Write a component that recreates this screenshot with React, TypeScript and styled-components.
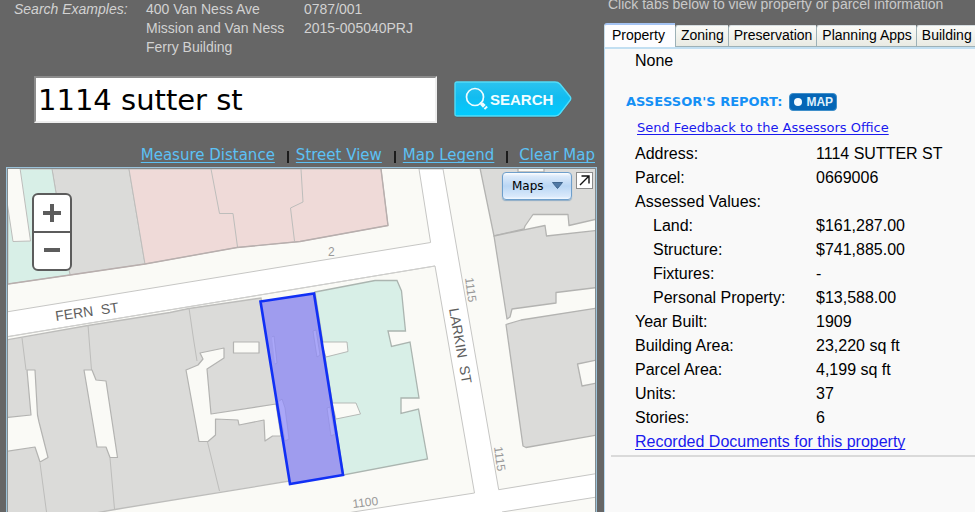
import React, { useState } from "react";
import styled, { createGlobalStyle } from "styled-components";

const GlobalStyle = createGlobalStyle`
  * { box-sizing: border-box; }
  html, body { margin: 0; background: #fff; }
  body { font-family: "Liberation Sans", Arial, sans-serif; color: #000; overflow: hidden; }
`;

const Page = styled.div`
  display: grid;
  grid-template-columns: minmax(0, 604fr) minmax(0, 371fr);
  min-height: calc(100vh - 1px);
  background: #666;
`;

const SearchColumn = styled.main`
  display: flex;
  flex-direction: column;
  padding: 0 7px 0 6px;
`;

const Examples = styled.div`
  display: grid;
  grid-template-columns: 132px 158px auto;
  padding-left: 8px;
  min-height: 76px;
  align-items: start;
  font-size: 14px;
  line-height: 19px;
  color: #d2d2d2;
`;

const ExamplesTitle = styled.em``;

const ExampleList = styled.ul`
  margin: 0;
  padding: 0;
  list-style: none;
`;

const SearchForm = styled.form`
  display: flex;
  align-items: center;
  gap: 17px;
  margin: 0;
  padding: 0 25px 0 28px;
`;

const SearchInput = styled.input`
  flex: 1;
  min-width: 0;
  height: 47px;
  padding: 0 0 0 2px;
  border: 2px solid;
  border-color: #8c8c8c #eee #eee #8c8c8c;
  border-radius: 0;
  background: #fff;
  color: #000;
  font-family: "DejaVu Sans", Verdana, sans-serif;
  font-size: 29px;
  outline: none;
`;

const SearchButton = styled.button`
  position: relative;
  display: flex;
  align-items: center;
  width: 118px;
  height: 38px;
  padding: 0 0 0 36px;
  border: 0;
  background: none;
  color: #f1fdff;
  font: bold 15px/36px "Liberation Sans", Arial, sans-serif;
  cursor: pointer;

  svg { position: absolute; inset: 0; }
  span { position: relative; }
`;

const MapLinks = styled.nav`
  display: flex;
  justify-content: flex-end;
  align-items: center;
  height: 44px;
  padding: 20px 2px 0 0;
  font-family: "DejaVu Sans", Verdana, sans-serif;
  font-size: 15px;
  line-height: 20px;
`;

const MapLink = styled.a`
  color: #5cc1f5;
  text-underline-offset: 2px;
  text-decoration-skip-ink: none;
`;

const Divider = styled.span<{ $wide?: boolean }>`
  width: 2px;
  height: 12px;
  margin: 4px ${(p) => (p.$wide ? 11 : 7)}px 0 12px;
  background: #1c1c1c;
`;

const MapFrame = styled.section`
  position: relative;
  flex: 1;
  min-height: 345px;
  border: 1px solid #9cc3da;
  border-bottom: 0;
  overflow: hidden;
`;

const MapSurface = styled.div`
  position: absolute;
  inset: 0;
  border: 1px solid #858b8d;
  border-bottom: 0;

  svg { display: block; width: 100%; height: 100%; }
`;

const ZoomControl = styled.div`
  position: absolute;
  top: 25px;
  left: 25px;
  width: 40px;
  border: 2px solid #5c5c5c;
  border-radius: 6px;
  overflow: hidden;
  background: #5c5c5c;
  display: grid;
  gap: 2px;
`;

const ZoomButton = styled.button`
  display: grid;
  place-items: center;
  height: 36px;
  padding: 0;
  border: 0;
  background: #fff;
  cursor: pointer;
`;

const MapTools = styled.div`
  position: absolute;
  top: 4px;
  right: 3px;
  display: flex;
  align-items: flex-start;
  gap: 4px;
`;

const MapsButton = styled.button`
  display: flex;
  align-items: center;
  gap: 8px;
  width: 70px;
  height: 28px;
  padding: 0 0 1px 9px;
  border: 1px solid #6e9fcc;
  border-radius: 4px;
  background: linear-gradient(#fff 0, #dceafa 12%, #b9d6f4 50%, #d9e9fb 90%, #f4f9ff 100%);
  box-shadow: 0 1px 1px #8cabc6;
  color: #000;
  font: 12px "DejaVu Sans", Verdana, sans-serif;
`;

const ExpandButton = styled.button`
  width: 17px;
  height: 17px;
  padding: 0;
  border: 1px solid #8b8b8b;
  background: #fff;
  display: grid;
  place-items: center;
`;

const InfoColumn = styled.aside`
  display: flex;
  flex-direction: column;
  min-width: 0;
  overflow: hidden;
`;

const Hint = styled.p`
  margin: 0 0 0 4px;
  font-size: 14px;
  line-height: 8px;
  height: 23px;
  color: #c9c9c9;
  white-space: nowrap;
`;

const TabBar = styled.div`
  display: flex;
  align-items: flex-end;
  height: 24px;
`;

const Tab = styled.button<{ $active?: boolean }>`
  flex: none;
  height: ${(p) => (p.$active ? 24 : 22)}px;
  padding: ${(p) => (p.$active ? "0 10px 3px 7px" : "0 4px 2px 5px")};
  border: 1px solid ${(p) => (p.$active ? "#c5dcea" : "#9db1b7")};
  border-top: ${(p) => (p.$active ? "2px solid #a4c3f3" : "1px solid #d5dde0")};
  border-right-width: 0;
  border-bottom-width: ${(p) => (p.$active ? 0 : 1)}px;
  border-radius: 3px 0 0 0;
  background: ${(p) => (p.$active ? "#fdfdff" : "linear-gradient(#fafbf8, #e9eae3)")};
  color: #000;
  font: 14px/18px "Liberation Sans", Arial, sans-serif;
  text-align: left;
`;

const Report = styled.div`
  flex: 1;
  border-left: 1px solid #b5d8f0;
  border-top: 2px solid #c2dff2;
  background: #f9f9f9;
  font-size: 16px;
  line-height: 24px;
`;

const NoneText = styled.p`
  margin: 0 0 17px 30px;
`;

const ReportHeading = styled.div`
  display: flex;
  align-items: center;
  gap: 7px;
  height: 24px;
  padding-left: 21px;
`;

const ReportTitle = styled.h2`
  margin: 0;
  color: #1590f5;
  font: bold 13px/20px "DejaVu Sans", Verdana, sans-serif;
`;

const MapBadge = styled.button`
  display: flex;
  align-items: center;
  gap: 4px;
  width: 48px;
  height: 18px;
  padding: 0 4px;
  border: 1px solid #3f8fca;
  border-radius: 4px;
  background: #0566b6;
  color: #dff0fb;
  font: bold 12px/16px "Liberation Sans", Arial, sans-serif;
`;

const Dot = styled.i`
  width: 8px;
  height: 8px;
  flex: none;
  border-radius: 50%;
  background: #f2faff;
`;

const TextLink = styled.a`
  color: #1a1aee;
  text-underline-offset: 2px;
  text-decoration-skip-ink: none;
`;

const Feedback = styled.p`
  margin: 0 0 0 32px;
  font: 13px/28px "DejaVu Sans", Verdana, sans-serif;
`;

const Details = styled.table`
  border-collapse: collapse;
  margin-left: 30px;
  line-height: 24px;
`;

const Label = styled.th<{ $indent?: boolean }>`
  width: 181px;
  padding: 0 0 0 ${(p) => (p.$indent ? 18 : 0)}px;
  font-weight: normal;
  text-align: left;
  white-space: nowrap;
`;

const Value = styled.td`
  padding: 0;
  white-space: nowrap;
`;

const Records = styled.p`
  margin: 0 0 0 6px;
  padding: 0 0 1px 24px;
  border-bottom: 2px solid #dadada;
`;

const details: [string, string, boolean?][] = [
  ["Address:", "1114 SUTTER ST"],
  ["Parcel:", "0669006"],
  ["Assessed Values:", ""],
  ["Land:", "$161,287.00", true],
  ["Structure:", "$741,885.00", true],
  ["Fixtures:", "-", true],
  ["Personal Property:", "$13,588.00", true],
  ["Year Built:", "1909"],
  ["Building Area:", "23,220 sq ft"],
  ["Parcel Area:", "4,199 sq ft"],
  ["Units:", "37"],
  ["Stories:", "6"],
];

const tabs = ["Property", "Zoning", "Preservation", "Planning Apps", "Building"];

function ParcelMap() {
  const line = "#bdbdbb";
  const edge = "#b3b3b1";
  return (
    <svg viewBox="8 169 587 343" preserveAspectRatio="xMinYMin slice" role="img" aria-label="Parcel map">
      <rect x="8" y="169" width="2000" height="2000" fill="#fafaf6" />
      <path
        d="M0 313 430.6 242.5 419 169H443L498.7 489.7 600 473V496.5L502 512V520H310L353 512 474.5 493 435 266 0 338Z"
        fill="#fff" stroke="#c6c6c4"
      />
      <g stroke={line} strokeLinejoin="round">
        <path d="M52 169H129L145 264 70 275Z" fill="#dbdbd9" />
        <path d="M8 169H52L56 193 70 275 8 284Z" fill="#d8efe7" />
        <path d="M6 168H20L30.5 241 13 241.5 6 195Z" fill="#fafaf6" />
        <path d="M129 169H381L388 225.5 300 241.5 237 247.5 145 264Z" fill="#efdad8" />
        <path d="M211 169 219.5 213.5H233L237.5 247M294.5 241 290.5 208 303 202 301 169" fill="none" />
        <path d="M8 284 70 275 145 264 237 247.5 300 241.5 388 225.5 381 169" fill="none" stroke="#b8aead" strokeWidth="1.4" />
      </g>
      <g fill="#dbdbd9" stroke={edge} strokeWidth="1.3" strokeLinejoin="round">
        <path d="M480 168H518V172H544V168H597V219L569 225.5 568 214.5H533L525 226 524 229 494 236Z" />
        <path d="M494 236 545 225.5 546.5 236 597 230.5V287.5L556 292.5V303L512 309 510 317 507 319Z" />
        <path d="M506 324.5 521 320 597 308V435L526 447.5 523 446Z" />
        <path d="M577.5 364 597 360V383L582 386Z" fill="#fafaf6" />
      </g>
      <path d="M8 336.5 190 306.5 260 295 435 266" fill="none" stroke="#cfcfcd" />
      <path d="M6 340 88 325.5 170 312.5 189 308.5 261 298 290 481 115 509.5 90 514H6Z" fill="#dbdbd9" stroke={line} strokeWidth="1.3" />
      <path
        d="M22 338 26 370M88 325 91.5 370M189 308 193.5 339 197 361M40 463 46.5 512M110 458 114.5 509M207.5 442 219.5 491"
        fill="none" stroke={line}
      />
      <g fill="#fafaf6" stroke={edge} strokeWidth="1.2" strokeLinejoin="round">
        <path d="M27 370H35L37.5 415 39 422 48 457.5 40 462 35 447 6 451.5V417.5L31 415Z" />
        <path d="M84 370H92L96 380 106 381 117.5 457.5H110L106 447H97Z" />
        <path d="M200 353 224 348V358L207 369 211 414 276 404 281 436H272.5L265 441 264 420 239 425 238 420 215.5 419V435L208 441.5H199L186 370 198 365 203 359Z" />
        <path d="M233.5 342H259V353H233.5Z" />
      </g>
      <path
        d="M315 292 375 280.5 397 280.5 401.5 291 405.5 331H388L391.5 346.5 410 342 419 398H401V413.5L418.5 409 427.5 459 343.5 475Z"
        fill="#d8efe7" stroke="#abb5b0" strokeWidth="1.3"
      />
      <g fill="#fafaf6" stroke="#b5b9b6">
        <path d="M321 342H347L348 351.5 326 357Z" />
        <path d="M332 403H356L360.5 414 336 419Z" />
      </g>
      <path d="M260.5 301.5 314 293.5 343 475 290 484Z" fill="#9f9cee" />
      <g fill="#aaa7f8" stroke="#928fdf" strokeWidth=".7">
        <path d="M278 402 282 399 285 408 289 439 285 441Z" />
        <path d="M327 408 330 407 335 434 331 436Z" />
        <path d="M272 337 274 336 277 363 275 364M313 331 316 330 320 355 317 357Z" />
      </g>
      <path d="M260.5 301.5 314 293.5 343 475 290 484Z" fill="none" stroke="#1130f5" strokeWidth="2.6" />
      <g fontFamily="'Liberation Sans', Arial, sans-serif">
        <g fill="#5e5e5e" fontSize="14">
          <text transform="translate(56 321) rotate(-8)">{"FERN\u00a0 ST"}</text>
          <text transform="translate(449 309) rotate(80)">{"LARKIN\u00a0 ST"}</text>
        </g>
        <g fill="#999" fontSize="12">
          <text x="328" y="256">2</text>
          <text transform="translate(465 278) rotate(82)">1115</text>
          <text transform="translate(494 447) rotate(82)">1115</text>
          <text transform="translate(353 508) rotate(-7)">1100</text>
        </g>
      </g>
    </svg>
  );
}

export default function App() {
  const [query, setQuery] = useState("1114 sutter st");
  return (
    <>
      <GlobalStyle />
      <Page>
        <SearchColumn>
          <Examples>
            <ExamplesTitle>Search Examples:</ExamplesTitle>
            <ExampleList>
              <li>400 Van Ness Ave</li>
              <li>Mission and Van Ness</li>
              <li>Ferry Building</li>
            </ExampleList>
            <ExampleList>
              <li>0787/001</li>
              <li>2015-005040PRJ</li>
            </ExampleList>
          </Examples>
          <SearchForm onSubmit={(e) => e.preventDefault()}>
            <SearchInput aria-label="Search" value={query} onChange={(e) => setQuery(e.target.value)} />
            <SearchButton type="submit">
              <svg width="118" height="38" viewBox="0 0 118 38" aria-hidden="true">
                <defs>
                  <linearGradient id="searchFill" x1="0" y1="0" x2="0" y2="1">
                    <stop offset="0" stopColor="#2cc3ef" />
                    <stop offset=".45" stopColor="#12bcf0" />
                    <stop offset="1" stopColor="#00ccff" />
                  </linearGradient>
                </defs>
                <path d="M3.500 2H101Q104 2 106 4L116.500 16.500Q118 18.500 116.500 20.500L106 34Q104 36.500 101 36.500H3.500Q1 36.500 1 34V4.500Q1 2 3.500 2Z" fill="#4d5558" />
                <path d="M3 1H101Q104 1 106 3L116 15.500Q117.500 17.500 116 19.500L106 32.500Q104 35 101 35H3Q1 35 1 33V3Q1 1 3 1Z" fill="url(#searchFill)" stroke="#53dcf8" strokeWidth="1.4" />
                <circle cx="21" cy="16" r="8.500" fill="none" stroke="#effcff" strokeWidth="1.700" />
                <path d="M26 21.500 28 23.500" stroke="#effcff" strokeWidth="2" />
                <path d="M27.500 22.500 32.500 27.500" stroke="#effcff" strokeWidth="3.800" strokeDasharray="4 1 4" />
              </svg>
              <span>SEARCH</span>
            </SearchButton>
          </SearchForm>
          <MapLinks>
            <MapLink href="#measure">Measure Distance</MapLink>
            <Divider />
            <MapLink href="#street">Street View</MapLink>
            <Divider />
            <MapLink href="#legend">Map Legend</MapLink>
            <Divider $wide />
            <MapLink href="#clear">Clear Map</MapLink>
          </MapLinks>
          <MapFrame>
            <MapSurface>
              <ParcelMap />
            </MapSurface>
            <ZoomControl>
              <ZoomButton aria-label="Zoom in">
                <svg width="20" height="20"><path d="M1 10H19M10 1V19" stroke="#5c5c5c" strokeWidth="4" /></svg>
              </ZoomButton>
              <ZoomButton aria-label="Zoom out">
                <svg width="20" height="20"><path d="M2 9H18" stroke="#5c5c5c" strokeWidth="4" /></svg>
              </ZoomButton>
            </ZoomControl>
            <MapTools>
              <MapsButton>
                Maps
                <svg width="11" height="7" aria-hidden="true"><path d="M.5.5H10.500L5.500 6.500Z" fill="#5079a5" stroke="#41678f" /></svg>
              </MapsButton>
              <ExpandButton aria-label="Expand map">
                <svg width="13" height="13" aria-hidden="true"><path d="M2 11 10.500 2.500M3.500 2H11V9.500" fill="none" stroke="#111" strokeWidth="1.400" /></svg>
              </ExpandButton>
            </MapTools>
          </MapFrame>
        </SearchColumn>
        <InfoColumn>
          <Hint>Click tabs below to view property or parcel information</Hint>
          <TabBar role="tablist">
            {tabs.map((name, i) => (
              <Tab key={name} role="tab" aria-selected={i === 0} $active={i === 0}>
                {name}
              </Tab>
            ))}
          </TabBar>
          <Report>
            <NoneText>None</NoneText>
            <ReportHeading>
              <ReportTitle>ASSESSOR'S REPORT:</ReportTitle>
              <MapBadge><Dot />MAP</MapBadge>
            </ReportHeading>
            <Feedback><TextLink href="#feedback">Send Feedback to the Assessors Office</TextLink></Feedback>
            <Details>
              <tbody>
                {details.map(([label, value, indent]) => (
                  <tr key={label}>
                    <Label scope="row" $indent={indent}>{label}</Label>
                    <Value>{value}</Value>
                  </tr>
                ))}
              </tbody>
            </Details>
            <Records><TextLink href="#records">Recorded Documents for this property</TextLink></Records>
          </Report>
        </InfoColumn>
      </Page>
    </>
  );
}
